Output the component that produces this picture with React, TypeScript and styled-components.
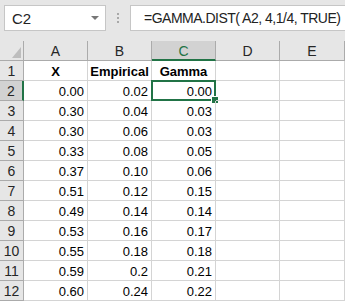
import React from 'react';
import styled, { createGlobalStyle, css } from 'styled-components';

const GlobalStyle = createGlobalStyle`
  html, body {
    margin: 0;
    padding: 0;
    background: #ffffff;
    overflow: hidden;
  }
  * {
    box-sizing: border-box;
  }
`;

// Layout
const Page = styled.div`
  width: 345px;
  height: 301px;
  font-family: 'Liberation Sans', Arial, sans-serif;
  background: #ffffff;
  overflow: hidden;
`;

const FormulaBar = styled.div`
  height: 41px;
  background: #e6e6e6;
  display: flex;
  align-items: flex-start;
  padding: 5px 0 0 4px;
`;

const NameBox = styled.div`
  width: 102px;
  height: 26px;
  background: #ffffff;
  border: 1px solid #c6c6c6;
  display: flex;
  align-items: center;
  justify-content: space-between;
  padding: 0 6px 0 7px;
  font-size: 15px;
  color: #222;
`;

const DropArrow = styled.span`
  width: 0;
  height: 0;
  border-left: 4px solid transparent;
  border-right: 4px solid transparent;
  border-top: 4px solid #777;
`;

const Grip = styled.div`
  width: 24px;
  height: 26px;
  display: flex;
  flex-direction: column;
  align-items: center;
  justify-content: center;
  gap: 2px;

  span {
    width: 2px;
    height: 2px;
    background: #a8a8a8;
  }
`;

const FormulaBox = styled.div`
  flex: 1;
  height: 26px;
  background: #ffffff;
  border: 1px solid #c6c6c6;
  border-right: none;
  display: flex;
  align-items: center;
  padding-left: 13px;
  font-size: 14px;
  letter-spacing: -0.5px;
  color: #222;
  white-space: nowrap;
  overflow: hidden;
`;

const Sheet = styled.div`
  display: grid;
  grid-template-columns: 24px 64px 64px 64px 64px 1fr;
  grid-auto-rows: 20px;
`;

const Corner = styled.div`
  background: #e6e6e6;
  border-right: 1px solid #ababab;
  border-bottom: 1px solid #ababab;
  position: relative;

  &::after {
    content: '';
    position: absolute;
    right: 2px;
    bottom: 2px;
    width: 0;
    height: 0;
    border-left: 9px solid transparent;
    border-bottom: 11px solid #bdbdbd;
  }
`;

const ColHead = styled.div<{ $active?: boolean }>`
  background: ${(p) => (p.$active ? '#d2d2d2' : '#e6e6e6')};
  border-right: 1px solid #ababab;
  border-bottom: 1px solid #ababab;
  display: flex;
  align-items: center;
  justify-content: center;
  font-size: 14px;
  color: ${(p) => (p.$active ? '#217346' : '#262626')};
  padding-top: 1px;
  ${(p) =>
    p.$active &&
    css`
      border-bottom: 2px solid #217346;
      padding-top: 2px;
    `}
`;

const RowHead = styled.div<{ $active?: boolean }>`
  background: ${(p) => (p.$active ? '#d2d2d2' : '#e6e6e6')};
  border-right: 1px solid #ababab;
  border-bottom: 1px solid #ababab;
  display: flex;
  align-items: center;
  justify-content: center;
  font-size: 14px;
  color: #262626;
  ${(p) =>
    p.$active &&
    css`
      border-right: 2px solid #217346;
    `}
`;

const Cell = styled.div<{ $align?: 'left' | 'right' | 'center'; $bold?: boolean; $active?: boolean }>`
  position: relative;
  border-right: 1px solid #d4d4d4;
  border-bottom: 1px solid #d4d4d4;
  display: flex;
  align-items: center;
  justify-content: ${(p) =>
    p.$align === 'right' ? 'flex-end' : p.$align === 'center' ? 'center' : 'flex-start'};
  padding: 1px 3px 0 3px;
  font-size: 13px;
  font-weight: ${(p) => (p.$bold ? 700 : 400)};
  color: #000;
  white-space: nowrap;
  ${(p) =>
    p.$active &&
    css`
      &::before {
        content: '';
        position: absolute;
        left: -1px;
        top: -1px;
        right: -1px;
        bottom: -1px;
        border: 2px solid #217346;
        pointer-events: none;
      }
      &::after {
        content: '';
        position: absolute;
        right: -4px;
        bottom: -4px;
        width: 6px;
        height: 6px;
        background: #217346;
        border: 1px solid #ffffff;
      }
    `}
`;

const rows: [string, string, string][] = [
  ['0.00', '0.02', '0.00'],
  ['0.30', '0.04', '0.03'],
  ['0.30', '0.06', '0.03'],
  ['0.33', '0.08', '0.05'],
  ['0.37', '0.10', '0.06'],
  ['0.51', '0.12', '0.15'],
  ['0.49', '0.14', '0.14'],
  ['0.53', '0.16', '0.17'],
  ['0.55', '0.18', '0.18'],
  ['0.59', '0.2', '0.21'],
  ['0.60', '0.24', '0.22'],
];

const columns = ['A', 'B', 'C', 'D', 'E'];

const App: React.FC = () => {
  return (
    <Page>
      <GlobalStyle />
      <FormulaBar>
        <NameBox>
          C2
          <DropArrow />
        </NameBox>
        <Grip>
          <span />
          <span />
          <span />
        </Grip>
        <FormulaBox>=GAMMA.DIST( A2, 4,1/4, TRUE)</FormulaBox>
      </FormulaBar>

      <Sheet>
        <Corner />
        {columns.map((c) => (
          <ColHead key={c} $active={c === 'C'}>
            {c}
          </ColHead>
        ))}

        <RowHead>1</RowHead>
        <Cell $align="center" $bold>X</Cell>
        <Cell $align="center" $bold>Empirical</Cell>
        <Cell $align="center" $bold>Gamma</Cell>
        <Cell />
        <Cell />

        {rows.map((r, i) => (
          <React.Fragment key={i}>
            <RowHead $active={i === 0}>{i + 2}</RowHead>
            <Cell $align="right">{r[0]}</Cell>
            <Cell $align="right">{r[1]}</Cell>
            <Cell $align="right" $active={i === 0}>{r[2]}</Cell>
            <Cell />
            <Cell />
          </React.Fragment>
        ))}
      </Sheet>
    </Page>
  );
};

export default App;
